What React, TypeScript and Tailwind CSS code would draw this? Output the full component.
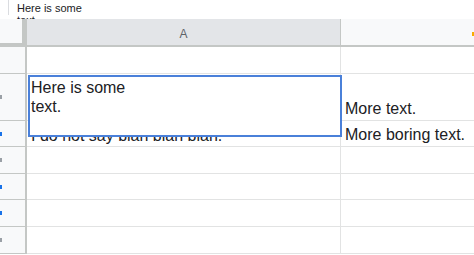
import React from "react";

const rows = [
  { h: "h-[27px]", mark: "", a: "", b: "" },
  { h: "h-[47px]", mark: "bg-[#9aa0a6]", a: "", b: "More text." },
  { h: "h-[26px]", mark: "bg-[#1a73e8]", a: "I do not say blah blah blah.", b: "More boring text." },
  { h: "h-[27px]", mark: "bg-[#9aa0a6]", a: "", b: "" },
  { h: "h-[26px]", mark: "bg-[#1a73e8]", a: "", b: "" },
  { h: "h-[27px]", mark: "bg-[#1a73e8]", a: "", b: "" },
  { h: "h-[27px]", mark: "bg-[#9aa0a6]", a: "", b: "" },
];

export default function App() {
  return (
    <div
      className="relative w-[474px] h-[255px] overflow-hidden bg-white text-[#202124]"
      style={{ fontFamily: '"Liberation Sans", Arial, sans-serif' }}
    >
      {/* formula bar */}
      <div className="flex h-[19px] overflow-hidden">
        <div className="w-[9px] h-[15px] border-r border-[#dadce0]" />
        <div className="pl-[8px] pt-[2px] text-[11px] leading-[12px] w-[100px]">
          Here is some
          <br />
          text.
        </div>
      </div>

      {/* header row */}
      <div className="flex h-[28px]">
        <div className="w-[27px] bg-[#f8f9fa] border-r-[5px] border-b-[4px] border-[#c4c7c5]" />
        <div className="w-[314px] bg-[#e3e5e8] border-r border-b-[2px] border-b-[#c4c7c5] border-r-[#c4c7c5] flex items-center justify-center text-[12px] text-[#5f6368] pt-[4px]">
          A
        </div>
        <div className="flex-1 bg-[#f8f9fa] border-b-[2px] border-[#c4c7c5] relative">
          <div className="absolute right-0 top-[13px] w-[2px] h-[4px] bg-[#f9ab00]" />
        </div>
      </div>

      {/* body rows */}
      {rows.map((r, i) => (
        <div key={i} className={`flex ${r.h}`}>
          <div className="w-[27px] bg-[#f8f9fa] border-r-[2px] border-b border-[#c4c7c5] flex items-center">
            {r.mark && <div className={`w-[2px] h-[4px] ${r.mark}`} />}
          </div>
          <div className="w-[314px] border-r border-b border-[#e2e3e3] flex items-end pl-[4px] pb-[1px] text-[16px] leading-[19px] whitespace-nowrap overflow-hidden">
            {r.a}
          </div>
          <div className="flex-1 border-b border-[#e2e3e3] flex items-end pl-[4px] pb-[2px] text-[16px] leading-[19px] whitespace-nowrap overflow-hidden">
            {r.b}
          </div>
        </div>
      ))}

      {/* in-cell editor overlay */}
      <div className="absolute left-[28px] top-[75px] w-[314px] h-[62px] bg-white border-2 border-[#4a80d9] pl-[1px] pt-[1px] text-[16px] leading-[19px]">
        Here is some
        <br />
        text.
      </div>
    </div>
  );
}
